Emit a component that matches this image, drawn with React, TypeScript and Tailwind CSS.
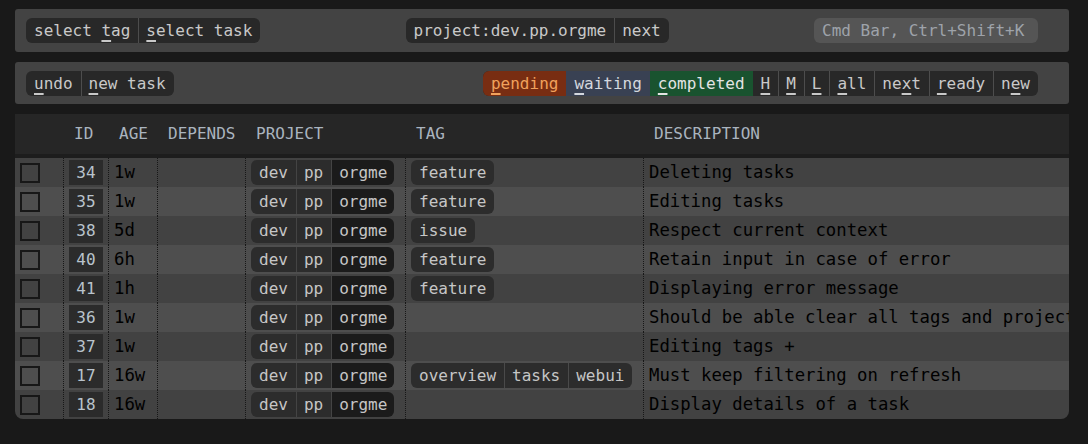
import React from "react";

const U = ({ children }: { children: React.ReactNode }) => (
  <span className="underline underline-offset-[4px] decoration-[1.5px]">{children}</span>
);

type Seg = { node: React.ReactNode; cls?: string; noBorder?: boolean };

const Group = ({ segs }: { segs: Seg[] }) => (
  <div className="flex h-[25px] rounded-[6px] overflow-hidden bg-[#282828] text-[#c9c9c9] leading-[25px]">
    {segs.map((s, i) => (
      <div
        key={i}
        className={`${i > 0 && !s.noBorder ? "border-l border-[#4d4d4d] pl-[7px] pr-2" : "px-2"} ${s.cls ?? ""}`}
      >
        {s.node}
      </div>
    ))}
  </div>
);

const rows = [
  { id: 34, age: "1w", tags: ["feature"], desc: "Deleting tasks" },
  { id: 35, age: "1w", tags: ["feature"], desc: "Editing tasks" },
  { id: 38, age: "5d", tags: ["issue"], desc: "Respect current context" },
  { id: 40, age: "6h", tags: ["feature"], desc: "Retain input in case of error" },
  { id: 41, age: "1h", tags: ["feature"], desc: "Displaying error message" },
  { id: 36, age: "1w", tags: [], desc: "Should be able clear all tags and projects" },
  { id: 37, age: "1w", tags: [], desc: "Editing tags +" },
  { id: 17, age: "16w", tags: ["overview", "tasks", "webui"], desc: "Must keep filtering on refresh" },
  { id: 18, age: "16w", tags: [], desc: "Display details of a task" },
];

const cols = "grid grid-cols-[48px_45px_49px_88px_160px_238px_426px]";
const cell = "border-l border-dotted border-neutral-900 pl-[5px] flex items-center";

export default function App() {
  return (
    <div className="min-h-[444px] w-[1088px] bg-[#191919] pt-[9px] pl-[15px] font-['DejaVu_Sans_Mono',monospace] text-[16px]">
      <div className="w-[1054px]">
        {/* Top bar */}
        <div className="h-[43px] bg-[#434343] rounded-[3px] flex items-center justify-between pl-[11px] pr-[31px]">
          <Group
            segs={[
              { node: <>select <U>t</U>ag</> },
              { node: <><U>s</U>elect task</> },
            ]}
          />
          <Group segs={[{ node: "project:dev.pp.orgme" }, { node: "next" }]} />
          <input
            className="w-[224px] h-[25px] bg-[#555555] rounded-[6px] px-2 outline-none text-[#9ea3aa] placeholder:text-[#9ea3aa]"
            placeholder="Cmd Bar, Ctrl+Shift+K"
          />
        </div>

        {/* Filter bar */}
        <div className="mt-[10px] h-[42px] bg-[#434343] rounded-[3px] flex items-center justify-between pl-[11px] pr-[31px]">
          <Group
            segs={[
              { node: <><U>u</U>ndo</> },
              { node: <><U>n</U>ew task</> },
            ]}
          />
          <Group
            segs={[
              { node: <><U>p</U>ending</>, cls: "bg-[#782d12] text-[#f0a15c]" },
              { node: <><U>w</U>aiting</>, cls: "bg-[#394153] text-[#d3d7de]", noBorder: true },
              { node: <><U>c</U>ompleted</>, cls: "bg-[#19532f] text-[#e4e4e4]", noBorder: true },
              { node: <U>H</U>, noBorder: true },
              { node: <U>M</U> },
              { node: <U>L</U> },
              { node: <><U>a</U>ll</> },
              { node: <>ne<U>x</U>t</> },
              { node: <><U>r</U>eady</> },
              { node: <>n<U>e</U>w</> },
            ]}
          />
        </div>

        {/* Table */}
        <div className="mt-[10px] rounded-b-[8px] overflow-hidden">
          <div className={`${cols} h-[44px] bg-[#262626] border-b-[4px] border-[#1d1d1d] text-[#aab4bf] items-center`}>
            <div />
            <div className="pl-[11px]">ID</div>
            <div className="pl-[11px]">AGE</div>
            <div className="pl-[11px]">DEPENDS</div>
            <div className="pl-[11px]">PROJECT</div>
            <div className="pl-[11px]">TAG</div>
            <div className="pl-[11px]">DESCRIPTION</div>
          </div>
          {rows.map((r, i) => (
            <div
              key={r.id}
              className={`${cols} h-[29px] ${i % 2 === 0 ? "bg-[#424242]" : "bg-[#4e4e4e]"} text-black`}
            >
              <div className="pl-[5px] flex items-center">
                <div className="w-5 h-5 border-2 border-neutral-900" />
              </div>
              <div className={cell}>
                <div className="w-[34px] h-[25px] bg-[#2b2b2b] text-[#b9c3cc] leading-[25px] text-center">
                  {r.id}
                </div>
              </div>
              <div className={`${cell} text-[17.3px] text-black`}>{r.age}</div>
              <div className="border-l border-dotted border-neutral-900" />
              <div className={cell}>
                <div className="flex h-[25px] rounded-[6px] overflow-hidden leading-[25px] text-[#c6c6c6]">
                  <div className="px-2 bg-[#2c2c2c]">dev</div>
                  <div className="pl-[7px] pr-2 bg-[#2c2c2c] border-l border-[#444444]">pp</div>
                  <div className="pl-[7px] pr-[7px] bg-[#1b1b1b] border-l border-[#444444]">orgme</div>
                </div>
              </div>
              <div className={cell}>
                {r.tags.length > 0 && (
                  <div className="flex h-[25px] rounded-[6px] overflow-hidden leading-[25px] text-[#c6c6c6] bg-[#2c2c2c]">
                    {r.tags.map((t, j) => (
                      <div key={t} className={j > 0 ? "pl-[7px] pr-2 border-l border-[#4a4a4a]" : "px-2"}>
                        {t}
                      </div>
                    ))}
                  </div>
                )}
              </div>
              <div className={`${cell} whitespace-nowrap overflow-hidden text-[17.3px] text-black`}>
                {r.desc}
              </div>
            </div>
          ))}
        </div>
      </div>
    </div>
  );
}
